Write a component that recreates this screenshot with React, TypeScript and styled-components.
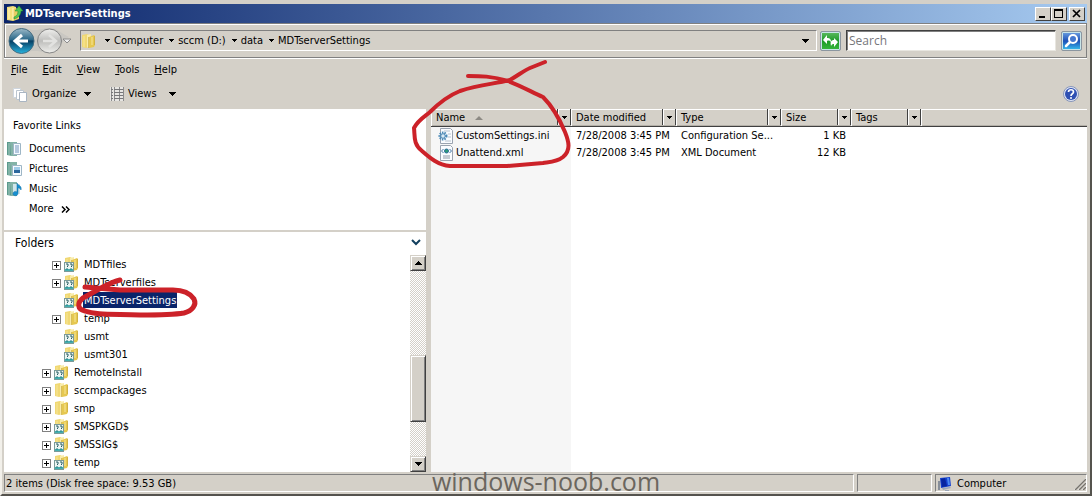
import React from "react";
import styled, { createGlobalStyle } from "styled-components";

const face = "#d4d0c8";
const shadow = "#808080";
const uiFont = '"DejaVu Sans Condensed", "Noto Sans", sans-serif';

const GlobalStyle = createGlobalStyle`
  *, *::before, *::after { box-sizing: border-box; }
  body { margin: 0; background: ${face}; font: 11px/14px ${uiFont}; color: #000; }
  button, input { font: inherit; color: inherit; margin: 0; padding: 0; border-radius: 0; }
  button { background: none; border: 0; }
  ul { list-style: none; margin: 0; padding: 0; }
  svg { display: block; flex: none; }
  a { color: inherit; text-decoration: none; }
`;

const Window = styled.div`
  position: relative;
  display: flex;
  flex-direction: column;
  min-height: 100vh;
  padding: 4px 3px 1px 2px;
  background: ${face};
  border-left: 2px solid #f2f0ea;
  border-right: 2px solid #55534e;
  border-bottom: 2px solid #55534e;
`;

const TitleBar = styled.header`
  display: flex;
  align-items: center;
  height: 19px;
  padding: 0 2px 0 2px;
  gap: 2px;
  color: #fff;
  background: linear-gradient(to right, #0a246a, #a6caf0);
`;

const Title = styled.h1`
  flex: 1;
  margin: 0;
  font-size: 11px;
  line-height: 14px;
  font-weight: bold;
`;

const CaptionButtons = styled.div`
  display: flex;
`;

const CaptionButton = styled.button<{ $apart?: boolean }>`
  display: grid;
  place-items: center;
  width: 16px;
  height: 14px;
  margin-left: ${(p) => (p.$apart ? "2px" : "0")};
  background: ${face};
  border: 1px solid;
  border-color: #fff #404040 #404040 #fff;
`;

const NavBar = styled.nav`
  display: flex;
  align-items: center;
  height: 35px;
  padding: 0 4px 0 3px;
  border: 1px solid ${shadow};
  box-shadow: inset 1px 1px #fff, 0 1px #fff;
`;

const TravelButtons = styled.div`
  display: flex;
  align-items: center;
  width: 72px;
`;

const AddressBar = styled.div`
  display: flex;
  flex: 1;
  align-items: center;
  height: 21px;
  margin-right: 3px;
  padding: 0 7px 0 0;
  border: 1px solid;
  border-color: ${shadow} #fff #fff ${shadow};
`;

const Crumbs = styled.ol`
  display: flex;
  flex: 1;
  list-style: none;
  margin: 0;
  padding: 0 0 0 5px;
`;

const Crumb = styled.li`
  display: flex;
  align-items: center;
  padding-left: 3px;
  gap: 4px;
  margin-right: 3px;
`;

const SquareButton = styled.button<{ $tone: "green" | "blue" }>`
  display: grid;
  place-items: center;
  width: 21px;
  height: 20px;
  border: 1px solid #8b96a0;
  border-radius: 2px;
  box-shadow: inset 0 0 0 1px #c8e4e8;
  background: ${(p) =>
    p.$tone === "green"
      ? "linear-gradient(#5fbb62, #1d9a28 50%, #37b83c)"
      : "linear-gradient(#6d9fe0, #1c50b8 50%, #38c0ee)"};
`;

const SearchInput = styled.input`
  width: 210px;
  height: 21px;
  padding: 0 2px;
  margin: 0 5px;
  font: 12px/16px "Open Sans", sans-serif;
  background: #fff;
  border: 1px solid;
  border-color: #404040 #e8e6e0 #e8e6e0 #404040;
  box-shadow: inset 1px 1px ${shadow};
  &::placeholder { color: #77777c; opacity: 1; }
`;

const MenuBar = styled.nav`
  display: flex;
  align-items: center;
  gap: 15px;
  height: 20px;
  margin-top: 1px;
  padding: 2px 0 0 7px;
`;

const Toolbar = styled.div`
  display: flex;
  align-items: center;
  height: 30px;
  padding: 0 8px 0 9px;
`;

const ToolButton = styled.button<{ $width: number }>`
  display: flex;
  align-items: center;
  gap: 4px;
  width: ${(p) => p.$width}px;
  & > :last-child { margin-left: auto; }
`;

const Tools = styled.div`
  display: flex;
  flex: 1;
  gap: 19px;
`;

const Spacer = styled.div`
  flex: 1;
`;

const Body = styled.main`
  display: flex;
  flex: 1;
`;

const Sidebar = styled.aside`
  display: flex;
  flex-direction: column;
  flex: none;
  width: 422px;
  margin-right: 5px;
  background: #fff;
`;

const Favorites = styled.section`
  height: 123px;
  padding: 10px 0 0 3px;
  border-bottom: 2px solid ${face};
`;

const FavoritesTitle = styled.h2`
  margin: 0 0 6px;
  padding-left: 6px;
  font-size: 11px;
  line-height: 14px;
  font-weight: normal;
`;

const FavoriteLink = styled.a`
  display: flex;
  align-items: center;
  height: 20px;
  gap: 7px;
`;

const IconSlot = styled.span`
  flex: none;
  width: 15px;
  height: 16px;
`;

const FoldersHeader = styled.button`
  display: flex;
  align-items: center;
  justify-content: space-between;
  height: 23px;
  padding: 0 5px 2px 11px;
  font-size: 12px;
`;

const FolderArea = styled.div`
  display: flex;
  flex: 1;
`;

const Tree = styled.ul`
  flex: 1;
`;

const TreeRow = styled.li<{ $depth: number }>`
  display: flex;
  align-items: center;
  height: 18px;
  padding-left: ${(p) => 28 + p.$depth * 10}px;
`;

const Expander = styled.button`
  display: grid;
  place-items: center;
  width: 9px;
  height: 9px;
  margin-top: 3px;
  background: #fff;
  border: 1px solid ${shadow};
`;

const NoExpander = styled.span`
  width: 9px;
`;

const FolderSlot = styled.span`
  margin: 0 3px 0 3px;
`;

const TreeLabel = styled.span<{ $selected?: boolean }>`
  height: 16px;
  line-height: 16px;
  padding: 1px 1px 0;
  color: ${(p) => (p.$selected ? "#fff" : "inherit")};
  background: ${(p) => (p.$selected ? "#0a246a" : "none")};
`;

const Scrollbar = styled.div`
  display: flex;
  flex-direction: column;
  width: 16px;
  background: repeating-conic-gradient(#fff 0 25%, ${face} 0 50%) 0 0 / 2px 2px;
`;

const ScrollPart = styled.button<{ $height: number }>`
  display: grid;
  place-items: center;
  width: 16px;
  height: ${(p) => p.$height}px;
  background: ${face};
  border: 1px solid;
  border-color: ${face} #404040 #404040 ${face};
  box-shadow: inset 1px 1px #fff, inset -1px -1px ${shadow};
`;

const Track = styled.div<{ $grow: number }>`
  flex: ${(p) => p.$grow} 0 0;
`;

const FilePane = styled.section`
  flex: 1;
  min-width: 0;
  background: linear-gradient(to right, #f6f6f6 140px, #fff 140px);
`;

const FileTable = styled.table`
  width: 100%;
  table-layout: fixed;
  border-collapse: collapse;
`;

const HeadCell = styled.th<{ $width?: number }>`
  width: ${(p) => (p.$width ? p.$width + "px" : "auto")};
  height: 17px;
  padding: 0;
  font-weight: normal;
  background: ${face};
  border-bottom: 1px solid #404040;
  box-shadow: inset 1px 1px #fff, inset 0 -1px #b4b0a8;
`;

const HeadInner = styled.div`
  display: flex;
  align-items: stretch;
  height: 16px;
`;

const SortButton = styled.button`
  display: flex;
  flex: 1;
  align-items: center;
  gap: 10px;
  padding: 2px 0 0 5px;
`;

const FilterButton = styled.button`
  display: grid;
  place-items: center;
  width: 14px;
  border-left: 1px solid #404040;
  border-right: 1px solid #404040;
  box-shadow: inset 1px 0 #fff;
`;

const Cell = styled.td<{ $right?: boolean }>`
  height: 17px;
  padding: 1px 5px 0;
  line-height: 16px;
  white-space: nowrap;
  text-align: ${(p) => (p.$right ? "right" : "left")};
`;

const FileName = styled.a`
  display: flex;
  align-items: center;
  gap: 2px;
  padding-left: 2px;
`;

const StatusBar = styled.footer`
  display: flex;
  gap: 3px;
  height: 21px;
  padding-top: 2px;
`;

const StatusPane = styled.div<{ $width?: number }>`
  display: flex;
  align-items: center;
  gap: 4px;
  flex: ${(p) => (p.$width ? "none" : "1")};
  width: ${(p) => (p.$width ? p.$width + "px" : "auto")};
  height: 18px;
  padding: 1px 0 0 1px;
  border: 1px solid;
  border-color: ${shadow} #fff #fff ${shadow};
`;

const Watermark = styled.div`
  position: absolute;
  bottom: 0;
  left: 0;
  right: 0;
  text-align: center;
  font: 25px/26px "Open Sans", sans-serif;
  color: #6b665e;
  pointer-events: none;
`;

const Markup = styled.svg`
  position: absolute;
  top: 0;
  left: -2px;
  pointer-events: none;
`;

const Arrow = ({ size = 7, up = false }: { size?: number; up?: boolean }) => {
  const h = (size + 1) / 2;
  return (
    <svg width={size} height={h} shapeRendering="crispEdges" aria-hidden="true">
      <path d={up ? `M0 ${h}h${size}L${size / 2} 0z` : `M0 0h${size}L${size / 2} ${h}z`} fill="#000" />
    </svg>
  );
};

const FolderIcon = ({ shared = false }: { shared?: boolean }) => (
  <svg width="16" height="16" viewBox="0 0 16 16" aria-hidden="true">
    <path d="M1 2l5-1 2 1v12l-3 1-4-1z" fill="#f0d873" />
    <path d="M6 2l4-1v12l-3 2-1-1z" fill="#f9ecaa" />
    <path d="M8 4l5-2 1 1v9l-1 2-5 1z" fill="#e6c850" />
    <path d="M3 3v11M11 4v8" stroke="#f7e69a" />
    <path d="M7.500 4v11M13.500 3v9" stroke="#c9a93d" strokeWidth=".7" />
    {shared && (
      <>
        <rect x=".5" y="6.500" width="9" height="9" fill="#edf5f2" stroke="#7b9a98" />
        <path d="M2 8h2v2l-1 1M6 8h2v2l-1 1" fill="none" stroke="#275d63" />
        <path d="M1 13h8v2H1z" fill="#45afb0" />
        <path d="M3 12v2M7 12v2" stroke="#257c82" />
      </>
    )}
  </svg>
);

const OpenFolderIcon = () => (
  <svg width="17" height="17" viewBox="0 0 17 17" aria-hidden="true">
    <path d="M1 2l6-1 3 1v12l-3 2-6-1z" fill="#f3df7c" />
    <path d="M7 4l6-1v11l-6 2z" fill="#e6ce66" />
    <path d="M3 3v11M7 3v12" stroke="#fff6c4" />
    <path d="M8 12c3-1 4-3 4-6H9l4-5 4 5h-2c0 4-3 7-7 8z" fill="#4fc653" stroke="#1f8f2c" strokeWidth=".5" />
  </svg>
);

const TravelIcon = () => (
  <svg width="66" height="28" viewBox="0 0 66 28" aria-hidden="true">
    <defs>
      <linearGradient id="back" x1="0" y1="0" x2="0" y2="1">
        <stop offset="0" stopColor="#9bb9c8" />
        <stop offset=".45" stopColor="#2a6889" />
        <stop offset=".5" stopColor="#073e63" />
        <stop offset="1" stopColor="#27b4df" />
      </linearGradient>
      <linearGradient id="fwd" x1="0" y1="0" x2="0" y2="1">
        <stop offset="0" stopColor="#efefed" />
        <stop offset=".5" stopColor="#bdbdbb" />
        <stop offset="1" stopColor="#efefec" />
      </linearGradient>
    </defs>
    <path d="M12 1c8 0 9 2 15 2s8-2 14-2c7 0 12 5 20 9-8 4-12 16-20 16-6 0-7-2-14-2s-8 2-15 2z" fill="#c9c7c2" />
    <circle cx="13.500" cy="14" r="12.500" fill="url(#back)" stroke="#436b80" />
    <path d="M14 8l-7 6 7 6M7 14h13" fill="none" stroke="#fff" strokeWidth="3" />
    <circle cx="41.500" cy="14" r="12" fill="url(#fwd)" stroke="#868686" />
    <path d="M41 8l7 6-7 6M48 14H35" fill="none" stroke="#e2e2e0" strokeWidth="2.500" />
    <path d="M55 12h8l-4 4z" fill="#eee" stroke="#8a8a8a" />
  </svg>
);

const RefreshIcon = () => (
  <svg width="17" height="16" viewBox="0 0 17 16" aria-hidden="true">
    <path d="M1 7l4-5v3c3 0 4 1 4 4-1-1-2-2-4-1v3z" fill="#fff" />
    <path d="M16 9l-4-4v2c-3 0-4 2-3 6 1-2 2-2 3-2v3z" fill="#fff" />
  </svg>
);

const LensIcon = () => (
  <svg width="17" height="16" viewBox="0 0 17 16" aria-hidden="true">
    <path d="M8 8L3 13" stroke="#fff" strokeWidth="2.500" strokeLinecap="round" />
    <circle cx="10" cy="6" r="4" fill="#4578cf" stroke="#fff" strokeWidth="2" />
  </svg>
);

const OrganizeIcon = () => (
  <svg width="15" height="15" viewBox="0 0 15 15" aria-hidden="true">
    <path d="M.5 1.500h7v9h-7z" fill="#fff" stroke="#cfd6de" />
    <path d="M3.500 3.500h7v9h-7z" fill="#fff" stroke="#bcc6d0" />
    <path d="M6.500 5.500h7v9h-7z" fill="#fff" stroke="#a9b5c2" />
  </svg>
);

const ViewsIcon = () => (
  <svg width="14" height="14" viewBox="0 0 14 14" shapeRendering="crispEdges" aria-hidden="true">
    <path d="M0 0h14v14H0z" fill="#e6e5e2" />
    <path d="M1 0v14M4 0v14M9 0v14M13 0v14" stroke="#8b8b8c" />
    <path d="M1 2h2M4 2h9M1 5h2M4 5h9M1 8h2M4 8h9M1 11h2M4 11h9" stroke="#77777a" />
  </svg>
);

const HelpIcon = () => (
  <svg width="16" height="16" viewBox="0 0 16 16" aria-hidden="true">
    <circle cx="8" cy="8" r="7.500" fill="#dfe5f4" stroke="#8795b8" />
    <circle cx="8" cy="8" r="6" fill="#2f50b3" />
    <path d="M5.500 6C5.500 3 10.500 3 10.500 6 10.500 8 8 7.500 8 10" fill="none" stroke="#fff" strokeWidth="1.700" />
    <circle cx="8" cy="12" r="1" fill="#fff" />
  </svg>
);

const PlaceIcon = ({ kind }: { kind: string }) => (
  <svg width="15" height="16" viewBox="0 0 15 16" aria-hidden="true">
    <path d="M0 1h5v14l-5-1z" fill="#5c9a8c" />
    <path d="M3 1h7v14H4z" fill="#83b3a7" />
    <path d="M2 2v12" stroke="#a4cabf" />
    {kind === "documents" && (
      <>
        <path d="M6.500 2.500h7v11h-7z" fill="#f5faff" stroke="#9eb6c6" />
        <path d="M8 5h4M8 7h4M8 9h4M8 11h4" stroke="#7295bd" />
      </>
    )}
    {kind === "pictures" && (
      <>
        <path d="M5.500 4.500h9v10h-9z" fill="#f7fbff" stroke="#9eb6c6" />
        <path d="M7 6h6v3H7z" fill="#9fcbe8" />
        <path d="M7 9h6v3H7z" fill="#2c679e" />
      </>
    )}
    {kind === "music" && (
      <>
        <path d="M6 3h7v10H6z" fill="#d1e6eb" />
        <path d="M10 2c1 3 5 2 4 7-1-2-2-2-3-2v5c0 4-5 3-5 1 0-3 3-3 4-2z" fill="#168fd0" stroke="#0f6ca4" strokeWidth=".5" />
      </>
    )}
  </svg>
);

const ChevronsIcon = () => (
  <svg width="9" height="7" viewBox="0 0 9 7" aria-hidden="true">
    <path d="M1 .5l3 3-3 3M5 .5l3 3-3 3" fill="none" stroke="#000" strokeWidth="1.500" />
  </svg>
);

const CollapseIcon = () => (
  <svg width="10" height="7" viewBox="0 0 10 7" aria-hidden="true">
    <path d="M1 1l4 4 4-4" fill="none" stroke="#123f5e" strokeWidth="2" />
  </svg>
);

const FileIcon = ({ kind }: { kind: string }) => (
  <svg width="16" height="16" viewBox="0 0 16 16" aria-hidden="true">
    <path d="M2.500.5h10l2 2v13h-12z" fill="#fafcff" stroke="#9aa3b0" />
    {kind === "ini" ? (
      <>
        <path d="M6 3h6M10 6h3M10 9h3M7 13h6" stroke="#b7c2cf" />
        <circle cx="5" cy="8" r="3.500" fill="none" stroke="#4787b5" strokeWidth="2" strokeDasharray="1.500 1" />
        <circle cx="5" cy="8" r="2.300" fill="#d9ebf6" stroke="#3f7eae" />
      </>
    ) : (
      <>
        <path d="M5.500 4l-2 2 2 2M11.500 4l2 2-2 2" fill="none" stroke="#3a73a4" />
        <circle cx="8.500" cy="6" r="2" fill="#2d9b76" stroke="#2b6d99" />
        <path d="M5 11h7M5 13h7" stroke="#8c97a5" />
      </>
    )}
  </svg>
);

const ComputerIcon = () => (
  <svg width="16" height="16" viewBox="0 0 16 16" aria-hidden="true">
    <path d="M1 5h2v9H1z" fill="#878e99" />
    <path d="M3 2l10-1 1 9-10 2z" fill="#1541cf" />
    <path d="M4 3l4-1 2 8-5 1z" fill="#0725a0" />
    <path d="M10 2h2l1 7h-2z" fill="#4d8bf2" />
    <path d="M5 12l8-1 1 1-8 2zM8 14h4v1H8z" fill="#9ba6b8" />
  </svg>
);

const GripIcon = () => (
  <svg width="12" height="12" viewBox="0 0 12 12" aria-hidden="true">
    <path d="M0 12L12 0M4 12l8-8M8 12l4-4" stroke="#fff" />
    <path d="M1 12L12 1M5 12l7-7M9 12l3-3" stroke="#77746e" strokeWidth="1.500" />
  </svg>
);

const crumbs = ["Computer", "sccm (D:)", "data", "MDTserverSettings"];
const menus = ["File", "Edit", "View", "Tools", "Help"];
const places = ["Documents", "Pictures", "Music"];
const folders = [
  { name: "MDTfiles", depth: 2, shared: true, expandable: true },
  { name: "MDTserverfiles", depth: 2, shared: true, expandable: true },
  { name: "MDTserverSettings", depth: 2, shared: true, selected: true },
  { name: "temp", depth: 2, expandable: true },
  { name: "usmt", depth: 2, shared: true },
  { name: "usmt301", depth: 2, shared: true },
  { name: "RemoteInstall", depth: 1, shared: true, expandable: true },
  { name: "sccmpackages", depth: 1, expandable: true },
  { name: "smp", depth: 1, expandable: true },
  { name: "SMSPKGD$", depth: 1, shared: true, expandable: true },
  { name: "SMSSIG$", depth: 1, shared: true, expandable: true },
  { name: "temp", depth: 1, shared: true, expandable: true },
];
const columns = [
  { name: "Name", width: 140 },
  { name: "Date modified", width: 105 },
  { name: "Type", width: 105 },
  { name: "Size", width: 70 },
  { name: "Tags", width: 70 },
];
const files = [
  { name: "CustomSettings.ini", kind: "ini", date: "7/28/2008 3:45 PM", type: "Configuration Se...", size: "1 KB" },
  { name: "Unattend.xml", kind: "xml", date: "7/28/2008 3:45 PM", type: "XML Document", size: "12 KB" },
];

export default function App() {
  return (
    <>
      <GlobalStyle />
      <Window>
        <TitleBar>
          <OpenFolderIcon />
          <Title>MDTserverSettings</Title>
          <CaptionButtons>
            <CaptionButton aria-label="Minimize">
              <svg width="10" height="9"><path d="M1 7h6v2H1z" /></svg>
            </CaptionButton>
            <CaptionButton aria-label="Maximize">
              <svg width="10" height="9" shapeRendering="crispEdges"><path d="M0 0h9v9H0zM1 2v6h7V2z" fillRule="evenodd" /></svg>
            </CaptionButton>
            <CaptionButton aria-label="Close" $apart>
              <svg width="10" height="9"><path d="M1 1l7 7M8 1L1 8" stroke="#000" strokeWidth="1.700" /></svg>
            </CaptionButton>
          </CaptionButtons>
        </TitleBar>

        <NavBar aria-label="Address">
          <TravelButtons><TravelIcon /></TravelButtons>
          <AddressBar>
            <FolderIcon />
            <Crumbs>
              {crumbs.map((c) => (
                <Crumb key={c}><Arrow size={5} /><a href="#path">{c}</a></Crumb>
              ))}
            </Crumbs>
            <button aria-label="Previous locations"><Arrow /></button>
          </AddressBar>
          <SquareButton $tone="green" aria-label="Refresh"><RefreshIcon /></SquareButton>
          <SearchInput type="text" placeholder="Search" aria-label="Search" />
          <SquareButton $tone="blue" aria-label="Start search"><LensIcon /></SquareButton>
        </NavBar>

        <MenuBar aria-label="Menu">
          {menus.map((m) => (
            <button key={m}><u>{m[0]}</u>{m.slice(1)}</button>
          ))}
        </MenuBar>

        <Toolbar>
          <Tools>
            <ToolButton $width={78}><OrganizeIcon />Organize<Arrow /></ToolButton>
            <ToolButton $width={66}><ViewsIcon />Views<Arrow /></ToolButton>
          </Tools>
          <button aria-label="Help"><HelpIcon /></button>
        </Toolbar>

        <Body>
          <Sidebar>
            <Favorites>
              <FavoritesTitle>Favorite Links</FavoritesTitle>
              {places.map((p) => (
                <FavoriteLink key={p} href="#place">
                  <IconSlot><PlaceIcon kind={p.toLowerCase()} /></IconSlot>{p}
                </FavoriteLink>
              ))}
              <FavoriteLink href="#more"><IconSlot />More<ChevronsIcon /></FavoriteLink>
            </Favorites>
            <FoldersHeader>Folders<CollapseIcon /></FoldersHeader>
            <FolderArea>
              <Tree>
                {folders.map((f, i) => (
                  <TreeRow key={i} $depth={f.depth}>
                    {f.expandable ? (
                      <Expander aria-label={"Expand " + f.name}>
                        <svg width="5" height="5" shapeRendering="crispEdges"><path d="M0 2h5v1H0zM2 0h1v5H2z" /></svg>
                      </Expander>
                    ) : (
                      <NoExpander />
                    )}
                    <FolderSlot><FolderIcon shared={f.shared} /></FolderSlot>
                    <TreeLabel $selected={f.selected}>{f.name}</TreeLabel>
                  </TreeRow>
                ))}
              </Tree>
              <Scrollbar>
                <ScrollPart $height={16} aria-label="Scroll up"><Arrow up /></ScrollPart>
                <Track $grow={84} />
                <ScrollPart $height={67} aria-label="Scroll position" />
                <Track $grow={34} />
                <ScrollPart $height={16} aria-label="Scroll down"><Arrow /></ScrollPart>
              </Scrollbar>
            </FolderArea>
          </Sidebar>

          <FilePane>
            <FileTable>
              <thead>
                <tr>
                  {columns.map((c, i) => (
                    <HeadCell key={c.name} $width={c.width}>
                      <HeadInner>
                        <SortButton>
                          {c.name}
                          {i === 0 && <svg width="8" height="4"><path d="M0 4h8L4 0z" fill="#8d8a84" /></svg>}
                        </SortButton>
                        <FilterButton aria-label={"Filter " + c.name}><Arrow size={5} /></FilterButton>
                      </HeadInner>
                    </HeadCell>
                  ))}
                  <HeadCell as="td" />
                </tr>
              </thead>
              <tbody>
                {files.map((f) => (
                  <tr key={f.name}>
                    <Cell><FileName href="#file"><FileIcon kind={f.kind} />{f.name}</FileName></Cell>
                    <Cell>{f.date}</Cell>
                    <Cell>{f.type}</Cell>
                    <Cell $right>{f.size}</Cell>
                    <Cell />
                    <Cell />
                  </tr>
                ))}
              </tbody>
            </FileTable>
          </FilePane>
        </Body>

        <StatusBar>
          <StatusPane>2 items (Disk free space: 9.53 GB)</StatusPane>
          <StatusPane $width={75} />
          <StatusPane $width={152}>
            <ComputerIcon />Computer<Spacer /><GripIcon />
          </StatusPane>
        </StatusBar>

        <Watermark>windows-noob.com</Watermark>
        <Markup width="600" height="330" fill="none" stroke="#cc2229" strokeLinecap="round" strokeLinejoin="round" aria-hidden="true">
          <path strokeWidth="4" d="M468 76C480 76 492 76 508 81C524 87 533 93 543 97C552 106 560 120 565 132C569 142 571 150 563 157C557 162 549 162 543 163L507 166L450 166C438 165 430 158 422 151C413 144 415 136 414 128C418 120 424 117 430 112C440 102 450 95 460 91C480 84 496 84 510 80C520 74 525 70 530 68L545 62" />
          <path strokeWidth="5" d="M120 280C112 282 107 285 101 288L83 298C77 303 77 309 85 311C96 315 110 314 140 315C158 315 172 315 184 313C192 311 197 305 194 299C190 293 184 290 173 290L120 290L85 287" />
        </Markup>
      </Window>
    </>
  );
}
